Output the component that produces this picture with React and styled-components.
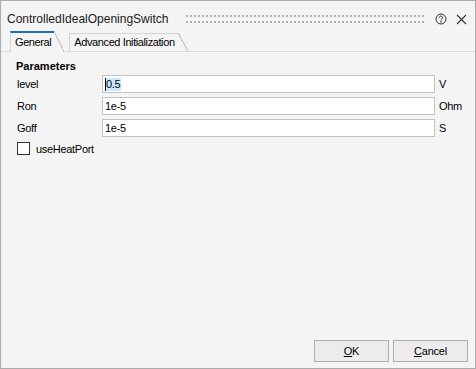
import React from 'react';
import styled, { createGlobalStyle } from 'styled-components';

const GlobalStyle = createGlobalStyle`
  html, body {
    margin: 0;
    padding: 0;
    background: #f4f4f4;
  }
  body {
    font-family: "Liberation Sans", Arial, sans-serif;
    color: #000;
  }
`

const Window = styled.div`
  box-sizing: border-box;
  width: 476px;
  height: 369px;
  border: 1px solid #ababab;
  background: #f4f4f4;
  display: flex;
  flex-direction: column;
`

const TitleBar = styled.div`
  box-sizing: border-box;
  height: 30px;
  padding: 6px 8px 0 6px;
  display: flex;
  align-items: center;
`

const Title = styled.div`
  font-size: 12px;
  line-height: 14px;
  color: #1a1a1a;
`

const Grip = styled.div`
  flex: 1;
  height: 8px;
  margin: 0 9px 0 18px;
  background:
    linear-gradient(to right, #b0b0b0 2px, transparent 2px) 0 0 / 4px 2px repeat-x,
    linear-gradient(to right, #b0b0b0 2px, transparent 2px) 0 6px / 4px 2px repeat-x;
`

const IconButton = styled.div`
  width: 12px;
  height: 12px;
  display: flex;
  align-items: center;
  justify-content: center;
  margin-left: ${p => p.gap || 0}px;
  color: #333;
`

const TabBar = styled.div`
  box-sizing: border-box;
  height: 21px;
  padding-left: 9px;
  display: flex;
  align-items: flex-end;
  border-bottom: 1px solid #dcdcdc;
`

const Tab = styled.div`
  position: relative;
  box-sizing: border-box;
  height: ${p => (p.active ? 21 : 18)}px;
  margin-bottom: ${p => (p.active ? -1 : 0)}px;
  margin-right: 15px;
  padding: 0 3px 1px 4px;
  display: flex;
  align-items: center;
  background: #f4f4f4;
  border-left: 1px solid #d4d4d4;
  border-top: ${p => (p.active ? '2px solid #1a6fb5' : '1px solid #d4d4d4')};
  font-size: 11px;
  letter-spacing: -0.4px;
  white-space: nowrap;
  z-index: ${p => (p.active ? 1 : 0)};

  &::after {
    content: '';
    position: absolute;
    left: 100%;
    top: ${p => (p.active ? -2 : -1)}px;
    bottom: 0;
    width: 10px;
    background: linear-gradient(
      to top right,
      #f4f4f4 calc(50% - 0.6px),
      #c8c8c8 calc(50% - 0.6px),
      #c8c8c8 calc(50% + 0.6px),
      transparent calc(50% + 0.6px)
    );
  }
`

const Body = styled.div`
  flex: 1;
  padding: 8px 8px 0 15px;
  display: flex;
  flex-direction: column;
`

const SectionTitle = styled.div`
  font-size: 11px;
  font-weight: bold;
  line-height: 13px;
  margin-bottom: 2px;
`

const ParamGrid = styled.div`
  display: grid;
  grid-template-columns: 86px 333px auto;
  row-gap: 4px;
  align-items: center;
`

const Label = styled.div`
  font-size: 11px;
  letter-spacing: -0.3px;
  padding-left: ${p => (p.unit ? 4 : 1)}px;
`

const Field = styled.div`
  box-sizing: border-box;
  height: 18px;
  border: 1px solid #c2c2c2;
  background: #fff;
  padding-left: 2px;
  display: flex;
  align-items: center;
  font-size: 11px;
  letter-spacing: -0.3px;
`

const Selected = styled.span`
  background: #cce8ff;
  border-left: 1px solid #000;
  padding: 1px 1px 1px 0;
  line-height: 11px;
`

const CheckRow = styled.label`
  display: flex;
  align-items: center;
  gap: 6px;
  margin-top: 5px;
  padding-left: 1px;
  font-size: 11px;
  letter-spacing: -0.3px;
`

const CheckBox = styled.span`
  box-sizing: border-box;
  width: 13px;
  height: 13px;
  border: 1px solid #333;
  background: #fff;
`

const Footer = styled.div`
  display: flex;
  justify-content: flex-end;
  gap: 4px;
  padding: 0 7px 6px 0;
`

const Button = styled.div`
  box-sizing: border-box;
  width: 75px;
  height: 22px;
  border: 1px solid #adadad;
  background: #ececec;
  display: flex;
  align-items: center;
  justify-content: center;
  font-size: 11px;
  letter-spacing: -0.2px;

  u {
    text-underline-offset: 1px;
  }
`

const HelpIcon = () => (
  <svg width="12" height="12" viewBox="0 0 12 12" fill="none" stroke="#333" strokeWidth="1">
    <circle cx="6" cy="6" r="5" />
    <path d="M4.4 4.7a1.6 1.6 0 1 1 2.3 1.4c-.5.3-.7.6-.7 1.1v.3" />
    <circle cx="6" cy="8.9" r="0.35" fill="#333" />
  </svg>
)

const CloseIcon = () => (
  <svg width="11" height="11" viewBox="0 0 11 11" stroke="#333" strokeWidth="1.1">
    <path d="M1 1l9 9M10 1l-9 9" />
  </svg>
)

const params = [
  { name: 'level', value: '0.5', unit: 'V', selected: true },
  { name: 'Ron', value: '1e-5', unit: 'Ohm' },
  { name: 'Goff', value: '1e-5', unit: 'S' },
]

const App = () => {
  return (
    <Window>
      <GlobalStyle />
      <TitleBar>
        <Title>ControlledIdealOpeningSwitch</Title>
        <Grip />
        <IconButton><HelpIcon /></IconButton>
        <IconButton gap={8}><CloseIcon /></IconButton>
      </TitleBar>
      <TabBar>
        <Tab active>General</Tab>
        <Tab>Advanced Initialization</Tab>
      </TabBar>
      <Body>
        <SectionTitle>Parameters</SectionTitle>
        <ParamGrid>
          {params.map(p => (
            <React.Fragment key={p.name}>
              <Label>{p.name}</Label>
              <Field>{p.selected ? <Selected>{p.value}</Selected> : p.value}</Field>
              <Label unit>{p.unit}</Label>
            </React.Fragment>
          ))}
        </ParamGrid>
        <CheckRow>
          <CheckBox />
          useHeatPort
        </CheckRow>
      </Body>
      <Footer>
        <Button><span><u>O</u>K</span></Button>
        <Button><span><u>C</u>ancel</span></Button>
      </Footer>
    </Window>
  );
}

export default App;
